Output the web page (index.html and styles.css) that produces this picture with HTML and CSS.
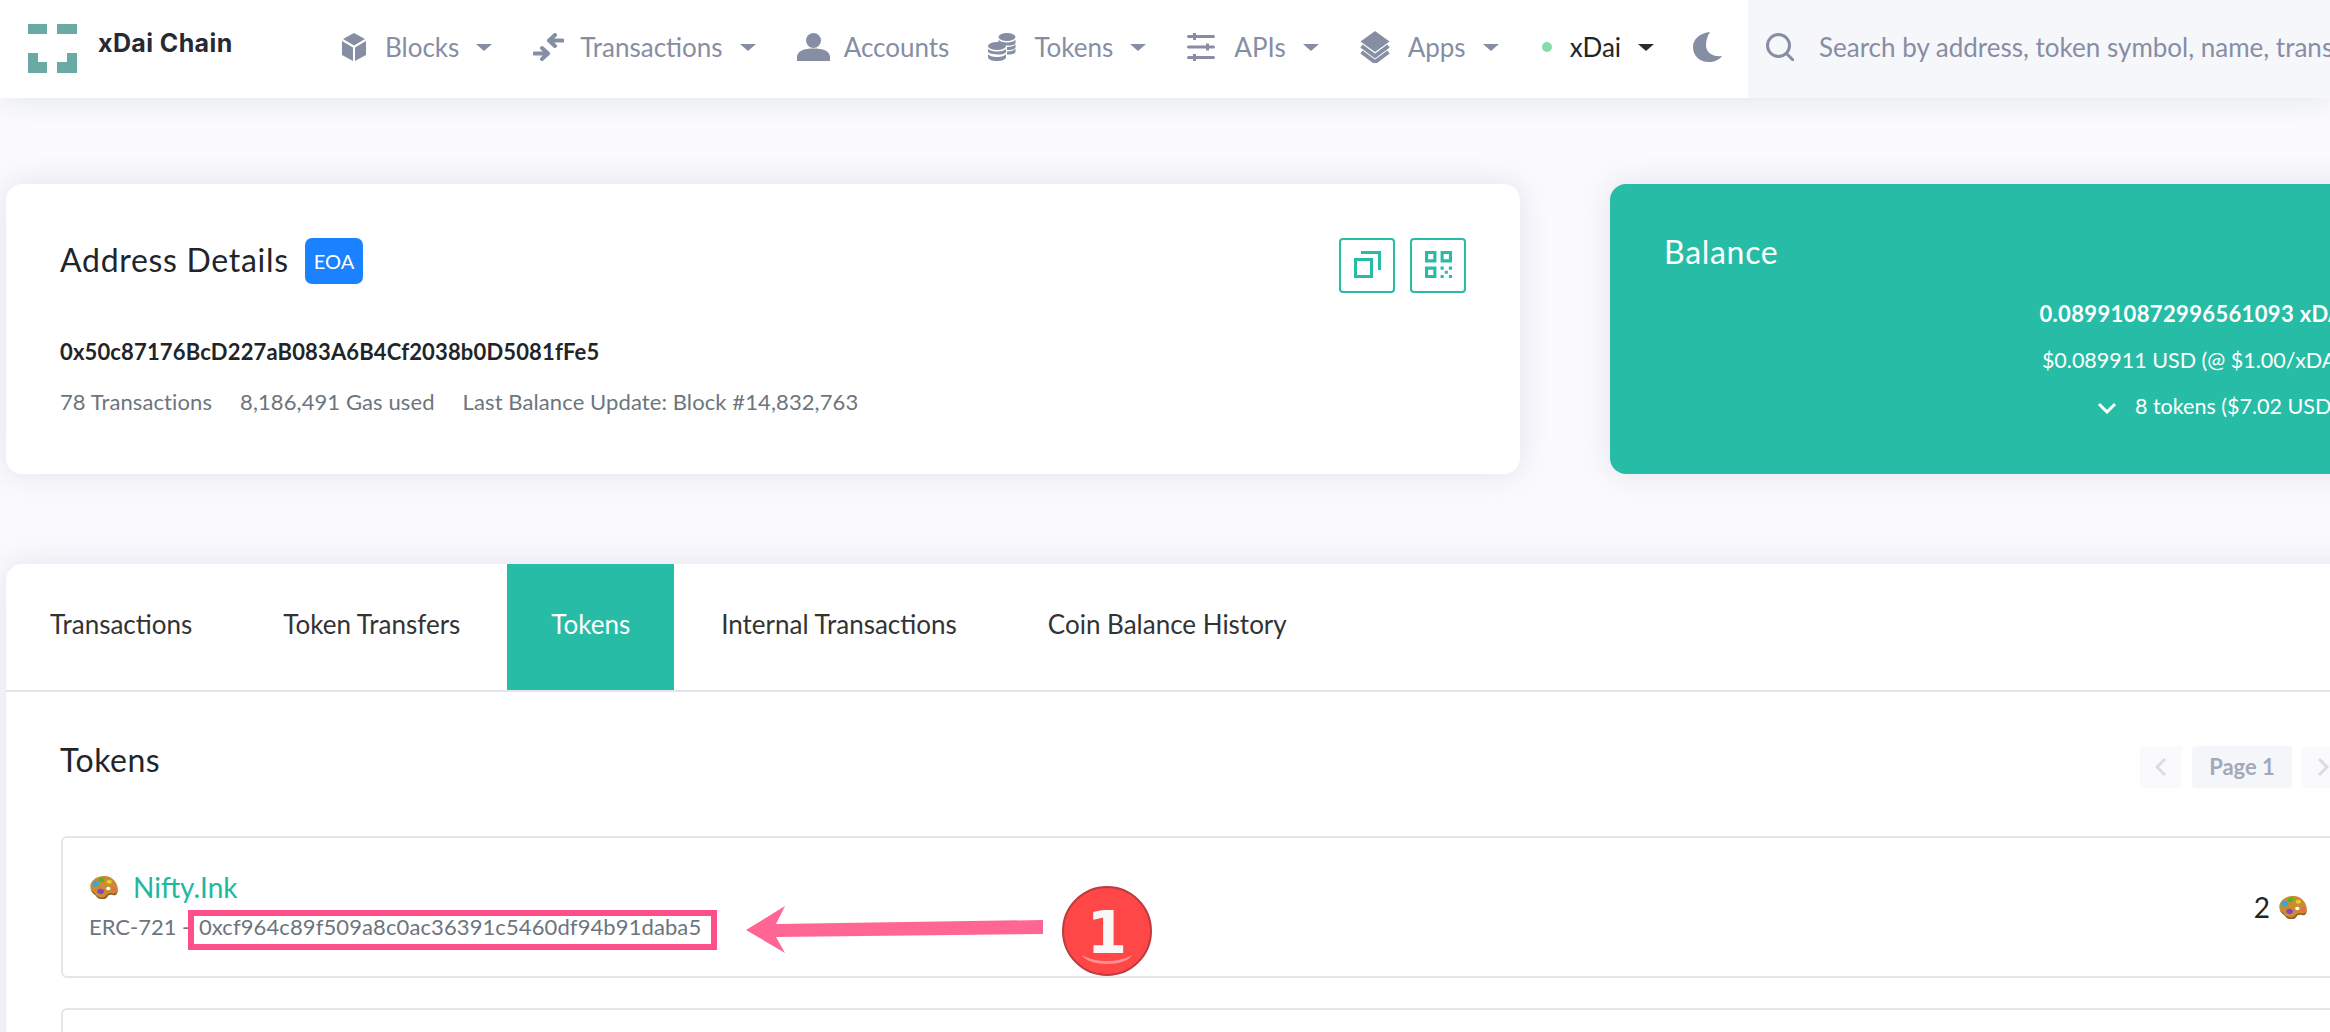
FILE: index.html
```html
<!DOCTYPE html>
<html>

<head>
    <title>xDai Chain</title>
    <link rel="stylesheet" href="styles.css">
</head>

<body>
    <svg class="defs" width="0" height="0">
        <symbol id="palette" viewBox="0 0 30 24">
            <path d="M2 15C-1 8 5 1 14 0c8-1 15 5 16 13 0 4-2 7-5 6-3-1-5 0-6 2-2 3-6 3-9 1-2-1-2-3-4-4-2-1-3-1-4-3z" fill="#c98b33" />
            <path d="M2 15c3 2 5 3 6 5 3 3 7 3 9 1 2-2 4-4 7-3 3 1 5-1 6-4 0 4-2 7-5 6-3-1-5 0-6 2-2 3-7 3-10 1-2-2-2-3-4-4-1-1-2-2-3-4z" fill="#94601f" />
            <ellipse cx="7" cy="8" rx="3.4" ry="3" fill="#35a8e0" />
            <ellipse cx="13" cy="4" rx="2.8" ry="2.4" fill="#4cb52a" />
            <ellipse cx="21" cy="6" rx="2.8" ry="2.2" fill="#e9c92e" />
            <ellipse cx="12" cy="16" rx="3.4" ry="2.8" fill="#8b3fc4" />
            <ellipse cx="26" cy="14" rx="2.4" ry="2.8" fill="#ee6a4d" />
            <ellipse cx="20" cy="13" rx="2.2" ry="1.8" fill="#fff" />
        </symbol>
    </svg>

    <header class="topbar">
        <div class="brand">
            <svg class="logo" viewBox="0 0 49 49">
                <path d="M0 0h19v10H0zM29 0h20v10H29zM0 29h10v9h9v11H0zM39 29h10v20H29V38h10z" />
            </svg>
            <span class="brand-name">xDai Chain</span>
        </div>

        <nav class="nav">
            <a class="nav-item">
                <svg class="nav-icon ic-blocks" viewBox="0 0 24 28">
                    <path d="M12 0l11 6-11 6.500L1 6zM0 8l11 6.500V28L0 22zM24 8l-11 6.500V28l11-6z" />
                </svg>
                <span class="nav-text t-blocks">Blocks</span>
                <i class="caret"></i>
            </a>
            <a class="nav-item">
                <svg class="nav-icon ic-trans" viewBox="0 0 31 28">
                    <path class="line" d="M29.500 7.500H17M22 2l-6 5.500 6 5.500M1.500 20.500H14M9 15l6 5.500L9 26" />
                </svg>
                <span class="nav-text t-trans">Transactions</span>
                <i class="caret"></i>
            </a>
            <a class="nav-item">
                <svg class="nav-icon ic-accounts" viewBox="0 0 33 28">
                    <circle cx="16.500" cy="7.500" r="7.500" />
                    <path d="M0 28v-4c0-6 7-8.500 16.500-8.500S33 18 33 24v4z" />
                </svg>
                <span class="nav-text t-accounts">Accounts</span>
            </a>
            <a class="nav-item">
                <svg class="nav-icon ic-tokens" viewBox="0 0 28 28">
                    <ellipse cx="19" cy="4" rx="8.500" ry="4" />
                    <path d="M10.500 6.500c1 2 4.500 3 8.500 3s7.500-1 8.500-3v3c0 2-4 3.500-8.500 3s-8.500-1.500-8.500-3zM19 14c4 0 7.500-1 8.500-3v3c0 2-4 3.500-8.500 3zM19 18.500c4 0 7.500-1 8.500-3v3c0 2-4 3.500-8.500 3z" />
                    <ellipse cx="9" cy="13" rx="9" ry="4" />
                    <path d="M0 15.500c1 2 4.500 3 9 3s8-1 9-3v3c0 2-4 3.500-9 3s-9-1.500-9-3zM0 21c1 2 4.500 3 9 3s8-1 9-3v3c0 2.500-4 4-9 4s-9-1.500-9-4z" />
                </svg>
                <span class="nav-text t-tokens">Tokens</span>
                <i class="caret"></i>
            </a>
            <a class="nav-item">
                <svg class="nav-icon ic-apis" viewBox="0 0 28 28">
                    <path d="M1.500 2h25a1.500 1.500 0 0 1 0 3h-25a1.500 1.500 0 0 1 0-3zM1.500 12.500h25a1.500 1.500 0 0 1 0 3h-25a1.500 1.500 0 0 1 0-3zM1.500 23h25a1.500 1.500 0 0 1 0 3h-25a1.500 1.500 0 0 1 0-3z" />
                    <path d="M6 0h3v7H6zM19 10.500h3v7h-3zM6 21h3v7H6z" />
                </svg>
                <span class="nav-text t-apis">APIs</span>
                <i class="caret"></i>
            </a>
            <a class="nav-item">
                <svg class="nav-icon ic-apps" viewBox="0 0 30 32">
                    <path d="M15 0l14.500 10.500L15 21 .5 10.500z" />
                    <path class="line-thick" d="M1.500 15L15 25l13.500-10M1.500 21L15 31l13.500-10" />
                </svg>
                <span class="nav-text t-apps">Apps</span>
                <i class="caret"></i>
            </a>
            <a class="nav-item">
                <i class="dot"></i>
                <span class="nav-text t-chain">xDai</span>
                <i class="caret caret-dark"></i>
            </a>
            <svg class="moon" viewBox="0 0 30 30">
                <path d="M17 0C7 1 0 7 0 15c0 9 7 15 16 15 5 0 10-2 13-6-9 1-16-3-16-11 0-5 2-10 4-13z" />
            </svg>
        </nav>

        <div class="search">
            <svg class="search-icon" viewBox="0 0 28 28">
                <circle cx="12.500" cy="12.500" r="11" />
                <path d="M20.500 20.500L27 27" />
            </svg>
            <input class="search-input" type="text" placeholder="Search by address, token symbol, name, transaction hash, or block number">
        </div>
    </header>

    <main class="page">
        <section class="overview">
            <div class="card details">
                <div class="details-top">
                    <div class="details-title">
                        <h1>Address Details</h1>
                        <span class="badge">EOA</span>
                    </div>
                    <div class="actions">
                        <a class="action">
                            <svg viewBox="0 0 27 27">
                                <path d="M1.500 8.500h16v17h-16zM7 1.500h18.500V19" />
                            </svg>
                        </a>
                        <a class="action">
                            <svg viewBox="0 0 26 26">
                                <path d="M1.500 1.500h8v8h-8zM16.500 1.500h8v8h-8zM1.500 16.500h8v8h-8z" />
                                <path class="qr-dots" d="M15 15h3v3h-3zM23 15h3v3h-3zM19 19h3v3h-3zM15 23h3v3h-3zM23 23h3v3h-3z" />
                            </svg>
                        </a>
                    </div>
                </div>
                <div class="address">0x50c87176BcD227aB083A6B4Cf2038b0D5081fFe5</div>
                <div class="stats">
                    <span>78 Transactions</span>
                    <span>8,186,491 Gas used</span>
                    <span>Last Balance Update: Block #14,832,763</span>
                </div>
            </div>

            <div class="card balance">
                <h2>Balance</h2>
                <div class="balance-values">
                    <div class="balance-main">0.089910872996561093 xDAI</div>
                    <div>$0.089911 USD (@ $1.00/xDAI)</div>
                    <div class="balance-tokens">
                        <svg class="chevron" viewBox="0 0 20 12">
                            <path d="M2 2l8 8 8-8" />
                        </svg>
                        8 tokens ($7.02 USD)
                    </div>
                </div>
            </div>
        </section>

        <section class="card panel">
            <div class="tabs">
                <a class="tab">Transactions</a>
                <a class="tab">Token Transfers</a>
                <a class="tab tab-active">Tokens</a>
                <a class="tab">Internal Transactions</a>
                <a class="tab">Coin Balance History</a>
            </div>

            <div class="panel-body">
                <div class="panel-head">
                    <h2>Tokens</h2>
                    <div class="pager">
                        <a class="pager-btn">
                            <svg viewBox="0 0 12 20"><path d="M10 2l-8 8 8 8" /></svg>
                        </a>
                        <span class="pager-page">Page 1</span>
                        <a class="pager-btn">
                            <svg viewBox="0 0 12 20"><path d="M2 2l8 8-8 8" /></svg>
                        </a>
                    </div>
                </div>

                <div class="token">
                    <div>
                        <div class="token-name">
                            <svg class="emoji"><use href="#palette" /></svg>
                            <a>Nifty.Ink</a>
                        </div>
                        <div class="token-meta">ERC-721 - <span class="token-addr">0xcf964c89f509a8c0ac36391c5460df94b91daba5</span></div>
                    </div>
                    <div class="token-count">
                        2
                        <svg class="emoji"><use href="#palette" /></svg>
                    </div>
                </div>

                <div class="token token-next"></div>
            </div>
        </section>
    </main>

    <!-- screenshot annotation drawn over the page -->
    <div class="mark-box"></div>
    <svg class="mark-arrow" viewBox="0 0 410 90">
        <path d="M0 25L39 1 30 19 297 15V29L30 32 39 48z" fill="#ff6694" />
        <circle cx="361" cy="26" r="44" fill="#ff4748" stroke="#bf3b40" stroke-width="2" />
        <path d="M336 50c14 8 36 8 50 0-6 12-44 12-50 0z" fill="#fff" opacity=".4" />
        <text x="361" y="48" class="mark-num">1</text>
    </svg>
</body>

</html>
```

FILE: styles.css
```css
html,
body {
    margin: 0;
    width: 2330px;
    height: 1032px;
    overflow: hidden;
}

body {
    position: relative;
    background-color: #fbfbfd;
    font-family: "Lato", "Noto Sans", sans-serif;
    color: #212529;
}

.defs {
    position: absolute;
}

h1,
h2 {
    margin: 0;
    font-weight: 400;
}

/* top bar */

.topbar {
    position: relative;
    display: flex;
    height: 98px;
    background-color: white;
    box-shadow: 0 0 30px 0 rgba(21, 53, 80, 0.12);
}

.brand {
    display: flex;
    flex: none;
    align-items: center;
    gap: 21px;
    width: 314px;
    padding-left: 28px;
    padding-bottom: 5px;
}

.logo {
    width: 49px;
    height: 49px;
    margin-top: 3px;
    fill: #69aaa5;
}

.brand-name {
    font-family: "Inter", sans-serif;
    font-size: 25px;
    font-weight: 700;
    letter-spacing: 0.4px;
    color: #262a33;
    margin-bottom: 8px;
}

.nav {
    display: flex;
    flex: none;
    align-items: center;
    gap: 41px;
    width: 1406px;
    padding-bottom: 4px;
    box-sizing: border-box;
}

.nav-item {
    display: flex;
    align-items: center;
    color: #868ea4;
    font-size: 26px;
}

.nav-icon {
    flex: none;
    fill: #868ea4;
    margin-right: 16px;
}

.line {
    fill: none;
    stroke: #868ea4;
    stroke-width: 4;
    stroke-linecap: round;
    stroke-linejoin: round;
}

.line-thick {
    fill: none;
    stroke: #868ea4;
    stroke-width: 4;
}

.ic-blocks {
    width: 24px;
    height: 28px;
    margin-right: 19px;
}

.ic-trans {
    width: 31px;
    height: 28px;
}

.ic-accounts {
    width: 33px;
    height: 28px;
    margin-right: 14px;
}

.ic-tokens {
    width: 28px;
    height: 28px;
    margin-left: -2px;
    margin-right: 18px;
}

.ic-apis {
    width: 28px;
    height: 28px;
    margin-right: 19px;
}

.ic-apps {
    width: 30px;
    height: 32px;
    margin-right: 18px;
}

.caret {
    width: 0;
    height: 0;
    margin-left: 17px;
    border-left: 8px solid transparent;
    border-right: 8px solid transparent;
    border-top: 7px solid #868ea4;
}

.caret-dark {
    border-top-color: #2b2b2b;
}

.dot {
    width: 10px;
    height: 10px;
    margin-left: 2px;
    margin-right: 18px;
    border-radius: 50%;
    background-color: #85dcab;
}

.t-chain {
    color: #212529;
}

.moon {
    width: 30px;
    height: 30px;
    margin-left: -2px;
    fill: #868ea4;
}

.search {
    display: flex;
    flex: 1;
    align-items: center;
    padding-left: 18px;
    padding-bottom: 4px;
    background-color: #f6f7fb;
}

.search-icon {
    flex: none;
    width: 28px;
    height: 28px;
    fill: none;
    stroke: #868ea4;
    stroke-width: 3;
    stroke-linecap: round;
}

.search-input {
    flex: 1;
    min-width: 0;
    margin-left: 25px;
    padding: 0;
    border: none;
    background: none;
    font-family: "Lato", "Noto Sans", sans-serif;
    font-size: 26px;
}

.search-input::placeholder {
    color: #868ea4;
    opacity: 1;
}

/* cards */

.page {
    padding: 86px 0 0 6px;
}

.card {
    background-color: white;
    border-radius: 16px;
    box-shadow: 0 0 30px 0 rgba(202, 199, 226, 0.5);
}

.overview {
    display: flex;
    gap: 90px;
    height: 290px;
}

.details {
    flex: none;
    width: 1514px;
    padding: 54px;
    box-sizing: border-box;
}

.details-top {
    display: flex;
    justify-content: space-between;
}

.details-title {
    display: flex;
    align-items: center;
    gap: 16px;
    height: 46px;
}

.details-title h1 {
    margin-top: -4px;
    font-size: 32px;
    letter-spacing: 0.7px;
}

.badge {
    padding: 0 9px;
    border-radius: 7px;
    background-color: #1a82ff;
    color: white;
    font-size: 20px;
    line-height: 46px;
}

.actions {
    display: flex;
    gap: 15px;
}

.action {
    display: flex;
    align-items: center;
    justify-content: center;
    width: 56px;
    height: 55px;
    box-sizing: border-box;
    border: 2px solid #27bca6;
    border-radius: 4px;
}

.action svg {
    width: 27px;
    height: 27px;
    margin-top: -3px;
    fill: none;
    stroke: #27bca6;
    stroke-width: 3;
}

.qr-dots {
    fill: #27bca6;
    stroke: none;
}

.address {
    margin-top: 44px;
    font-size: 22px;
    font-weight: 700;
    letter-spacing: 0.15px;
    line-height: 30px;
}

.stats {
    display: flex;
    gap: 28px;
    margin-top: 20px;
    color: #6c757d;
    font-size: 22px;
    letter-spacing: 0.1px;
    line-height: 30px;
}

.balance {
    flex: none;
    width: 1170px;
    padding: 48px 54px 0;
    box-sizing: border-box;
    background-color: #27bca6;
    color: white;
    white-space: nowrap;
}

.balance h2 {
    font-size: 32px;
    letter-spacing: 0.7px;
    line-height: 40px;
}

.balance-values {
    display: flex;
    flex-direction: column;
    gap: 16px;
    margin-top: 27px;
    font-size: 21.5px;
    line-height: 30px;
    text-align: center;
}

.balance-main {
    font-size: 22px;
    font-weight: 700;
    letter-spacing: 0.35px;
}

.balance-tokens {
    margin-left: 44px;
}

.chevron {
    width: 20px;
    height: 12px;
    margin-right: 12px;
    fill: none;
    stroke: white;
    stroke-width: 3;
}

/* tabs and token list */

.panel {
    width: 2393px;
    height: 600px;
    margin-top: 90px;
}

.tabs {
    display: flex;
    gap: 3px;
    height: 126px;
    border-bottom: 2px solid #e2e5ec;
}

.tab {
    display: flex;
    align-items: center;
    padding: 0 44px 6px;
    font-size: 26px;
    color: #333;
}

.tab-active {
    background-color: #27bca6;
    color: white;
}

.panel-body {
    padding: 54px 55px 0;
}

.panel-head {
    display: flex;
    justify-content: space-between;
    margin-bottom: 48px;
}

.panel-head h2 {
    margin: -2px 0 0 -1px;
    font-size: 32px;
    letter-spacing: 0.5px;
    line-height: 32px;
}

.pager {
    display: flex;
    gap: 10px;
}

.pager-btn {
    display: flex;
    align-items: center;
    justify-content: center;
    width: 42px;
    height: 42px;
    border-radius: 4px;
    background-color: #fafafc;
}

.pager-btn svg {
    width: 12px;
    height: 20px;
    fill: none;
    stroke: #d9dce3;
    stroke-width: 3;
}

.pager-page {
    width: 100px;
    border-radius: 4px;
    background-color: #f5f6fa;
    color: #a3a9b9;
    font-size: 22px;
    font-weight: 700;
    line-height: 42px;
    text-align: center;
}

.token {
    display: flex;
    justify-content: space-between;
    align-items: center;
    height: 142px;
    padding: 0 35px 0 26px;
    box-sizing: border-box;
    border: 2px solid #e2e5ec;
    border-radius: 6px;
}

.token-next {
    margin-top: 30px;
}

.token-name {
    display: flex;
    align-items: center;
    gap: 15px;
    font-size: 28px;
    line-height: 36px;
    color: #1eb8a1;
}

.emoji {
    width: 29px;
    height: 23px;
}

.token-meta {
    margin-top: 4px;
    color: #6c757d;
    font-size: 22px;
    line-height: 36px;
}

.token-addr {
    margin-left: 3px;
    letter-spacing: 0.1px;
}

.token-count {
    display: flex;
    align-items: center;
    gap: 8px;
    font-size: 28px;
}

/* annotation */

.mark-box {
    position: absolute;
    left: 188px;
    top: 910px;
    width: 529px;
    height: 40px;
    box-sizing: border-box;
    border: 6px solid #ff4f8b;
}

.mark-arrow {
    position: absolute;
    left: 746px;
    top: 905px;
    width: 410px;
    height: 90px;
    overflow: visible;
}

.mark-num {
    font-family: "DejaVu Sans", sans-serif;
    font-size: 58px;
    font-weight: 700;
    fill: #f8f8f8;
    text-anchor: middle;
}
```
